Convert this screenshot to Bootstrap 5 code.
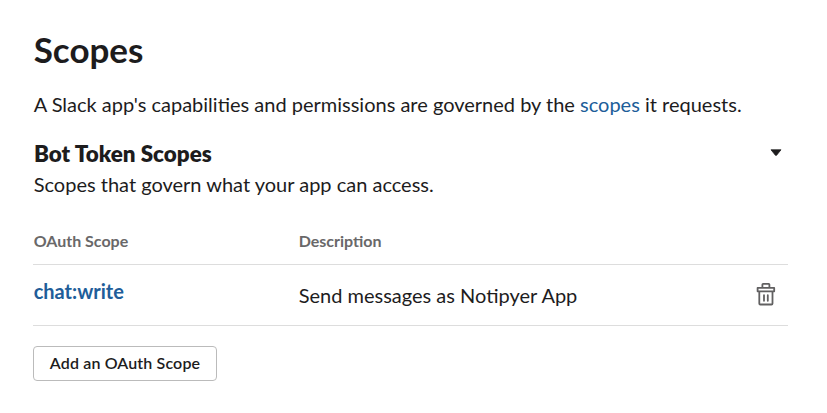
<!DOCTYPE html>
<html lang="en">
<head>
<meta charset="utf-8">
<title>Scopes</title>
<link href="https://cdn.jsdelivr.net/npm/bootstrap@5.3.0/dist/css/bootstrap.min.css" rel="stylesheet">
<style>
body{font-family:Lato,"Liberation Sans",sans-serif;color:#1d1c1d;font-size:20px;line-height:30px;background:#fff}
.scopes-page{padding:27px 39px 0 33px}
.page-title{font-size:35px;line-height:44px;font-weight:700;margin-bottom:18px;padding-left:.7px}
.section-title{font-size:22.4px;line-height:32px;font-weight:800;margin:0;padding-left:1px}
a{color:#205d99;text-decoration:none}
.scopes-page p{padding-left:.7px}
.intro{margin-bottom:19px}
.caret{margin-top:11px;margin-right:6px}
.section-note{line-height:28px}
.scope-grid{display:grid;grid-template-columns:265px 1fr 32px}
.scope-head>div,.scope-name,.scope-desc{padding-left:.7px}
.scope-head{margin-top:31px;font-size:16px;font-weight:700;color:#696869;line-height:24px;padding-bottom:11px;border-bottom:1px solid #ddd}
.scope-row{height:61px;border-bottom:1px solid #ddd}
.scope-name{font-weight:700;padding-top:11px}
.scope-desc{padding-top:15px}
.trash{padding:18px 0 0;line-height:0;border:0;background:none;display:flex;align-items:flex-start}
.btn-add{margin-top:20px;width:184px;height:35px;padding:0 0 2px;border:1px solid #bbb;border-radius:4px;font-weight:600;font-size:16px;letter-spacing:.14px;line-height:30px;color:#1d1c1d}
</style>
</head>
<body>
<main class="scopes-page">
<h1 class="page-title">Scopes</h1>
<p class="intro">A Slack app's capabilities and permissions are governed by the <a href="#">scopes</a> it requests.</p>
<section>
<div class="d-flex justify-content-between align-items-start">
<h2 class="section-title">Bot Token Scopes</h2>
<svg class="caret" width="12" height="8" viewBox="0 0 12 8"><path d="M1 .8h10L6.6 6.2Q6 6.9 5.4 6.2z" fill="#1d1c1d" stroke="#1d1c1d" stroke-width=".8" stroke-linejoin="round"/></svg>
</div>
<p class="section-note mb-0">Scopes that govern what your app can access.</p>
<div class="scope-grid scope-head"><div>OAuth Scope</div><div>Description</div></div>
<div class="scope-grid scope-row">
<div class="scope-name"><a href="#">chat:write</a></div>
<div class="scope-desc">Send messages as Notipyer App</div>
<button class="trash" type="button" aria-label="Delete"><svg width="20" height="24" viewBox="0 0 20 24" fill="none" stroke="#616061" stroke-width="1.8" stroke-linejoin="round" stroke-linecap="round"><path d="M6.4 4.3V1.6Q6.4 .9 7.1 .9h5.6q.7 0 .7.7v2.7M1.6 4.9h16.6v3.4H1.6zM3.3 8.3v12.2q0 1 1 1h11.2q1 0 1-1V8.3M8 12.2v5.6M11.8 12.2v5.6"/></svg></button>
</div>
<button class="btn btn-add" type="button">Add an OAuth Scope</button>
</section>
</main>
<script src="https://cdn.jsdelivr.net/npm/bootstrap@5.3.0/dist/js/bootstrap.bundle.min.js"></script>
</body>
</html>
